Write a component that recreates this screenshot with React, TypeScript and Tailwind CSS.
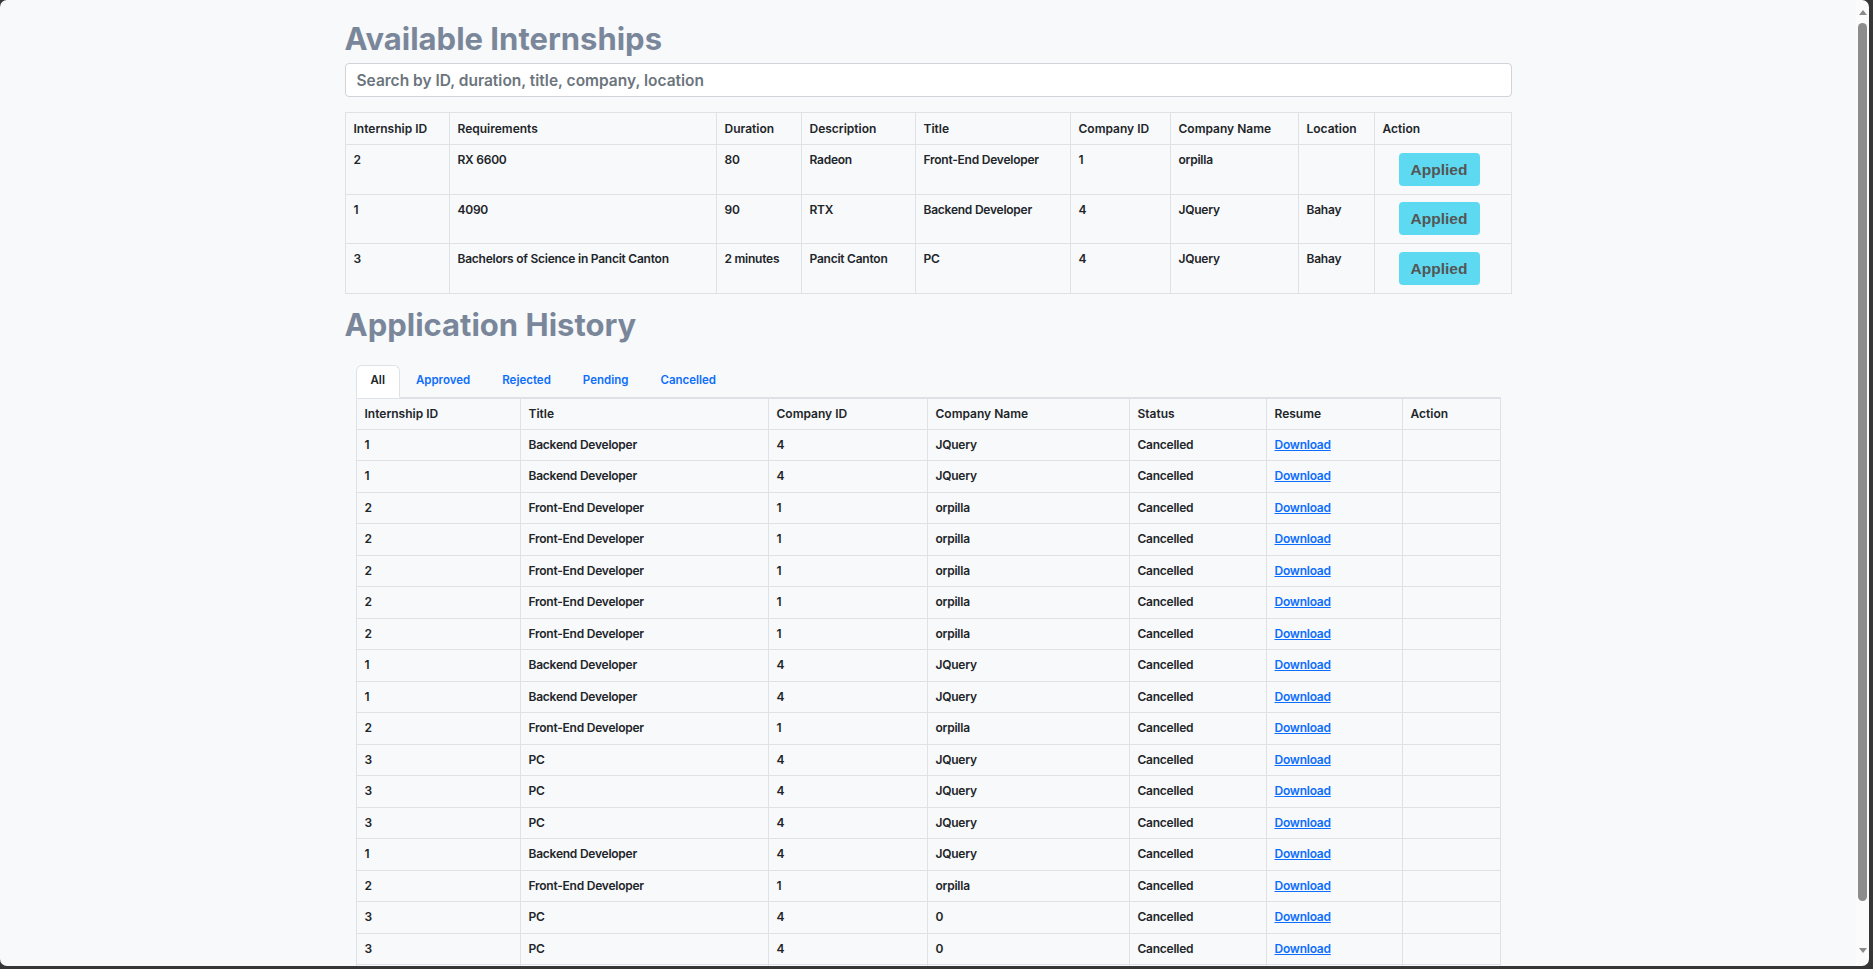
type Internship = {
  id: string;
  requirements: string;
  duration: string;
  description: string;
  title: string;
  companyId: string;
  companyName: string;
  location: string;
};

const internships: Internship[] = [
  { id: '2', requirements: 'RX 6600', duration: '80', description: 'Radeon', title: 'Front-End Developer', companyId: '1', companyName: 'orpilla', location: '' },
  { id: '1', requirements: '4090', duration: '90', description: 'RTX', title: 'Backend Developer', companyId: '4', companyName: 'JQuery', location: 'Bahay' },
  { id: '3', requirements: 'Bachelors of Science in Pancit Canton', duration: '2 minutes', description: 'Pancit Canton', title: 'PC', companyId: '4', companyName: 'JQuery', location: 'Bahay' },
];

const BD = ['1', 'Backend Developer', '4', 'JQuery'];
const FE = ['2', 'Front-End Developer', '1', 'orpilla'];
const PC = ['3', 'PC', '4', 'JQuery'];
const PC0 = ['3', 'PC', '4', '0'];

const history: string[][] = [BD, BD, FE, FE, FE, FE, FE, BD, BD, FE, PC, PC, PC, BD, FE, PC0, PC0, PC0];

const tabs = ['All', 'Approved', 'Rejected', 'Pending', 'Cancelled'];

function Heading({ children }: { children: string }) {
  return <h1 className="text-[31px] leading-[36px] font-bold text-[#7a879b]">{children}</h1>;
}

function Arrow({ down }: { down?: boolean }) {
  return (
    <svg width="8" height="5" viewBox="0 0 8 5" className="shrink-0">
      <path d={down ? 'M0 0 L8 0 L4 5 Z' : 'M0 5 L8 5 L4 0 Z'} fill="#8a8a8a" />
    </svg>
  );
}

export default function App() {
  const th1 = 'border border-[#dee2e6] px-2 h-[32px] text-left align-middle font-semibold';
  const td1 = 'border border-[#dee2e6] px-2 pt-2 align-top leading-[14px]';
  const th2 = 'border border-[#dee2e6] px-2 text-left align-middle font-semibold';
  const td2 = 'border border-[#dee2e6] px-2 align-middle';

  return (
    <div className="h-[969px] w-full overflow-hidden bg-[#363636]">
      <div className="mr-[4px] flex h-[966px] overflow-hidden rounded-[7px]">
        <main className="flex-1 overflow-hidden bg-[#f8f9fa] font-['Inter',sans-serif] text-[#212529]">
          <div className="mx-auto w-[1167px] pt-[21px]">
            <Heading>Available Internships</Heading>
            <input
              className="mt-[6px] block h-[34px] w-full rounded-[4px] border border-[#ced4da] bg-white px-[11px] text-[15.5px] font-semibold outline-none placeholder:text-[#6c757d]"
              placeholder="Search by ID, duration, title, company, location"
            />

            <table className="mt-[15px] w-full table-fixed border-collapse text-[12px]">
              <thead>
                <tr>
                  <th className={`${th1} w-[104px]`}>Internship ID</th>
                  <th className={`${th1} w-[267px]`}>Requirements</th>
                  <th className={`${th1} w-[85px]`}>Duration</th>
                  <th className={`${th1} w-[114px]`}>Description</th>
                  <th className={`${th1} w-[155px]`}>Title</th>
                  <th className={`${th1} w-[100px]`}>Company ID</th>
                  <th className={`${th1} w-[128px]`}>Company Name</th>
                  <th className={`${th1} w-[76px]`}>Location</th>
                  <th className={th1}>Action</th>
                </tr>
              </thead>
              <tbody className="font-semibold tracking-[-0.02em]">
                {internships.map((it) => (
                  <tr key={it.id}>
                    <td className={td1}>{it.id}</td>
                    <td className={td1}>{it.requirements}</td>
                    <td className={td1}>{it.duration}</td>
                    <td className={td1}>{it.description}</td>
                    <td className={td1}>{it.title}</td>
                    <td className={td1}>{it.companyId}</td>
                    <td className={td1}>{it.companyName}</td>
                    <td className={td1}>{it.location}</td>
                    <td className="border border-[#dee2e6] py-[7.75px] pr-[11px] pl-[4px] text-center align-top">
                      <button className="h-[33px] w-[81px] rounded-[4px] bg-[#5ddaf1] font-['Liberation_Sans',Arial,sans-serif] text-[15.5px] font-bold tracking-normal text-[#555]">
                        Applied
                      </button>
                    </td>
                  </tr>
                ))}
              </tbody>
            </table>

            <div className="mt-[13px]">
              <Heading>Application History</Heading>
            </div>

            <div className="mx-[11px] mt-[22px]">
              <div className="flex h-[33px] border-b border-[#dee2e6] text-[11.5px] font-semibold">
                {tabs.map((t, i) =>
                  i === 0 ? (
                    <div
                      key={t}
                      className="-mb-px flex h-[33px] items-center rounded-t-[6px] border border-[#dee2e6] border-b-white bg-white px-[14px] text-[#212529]"
                    >
                      {t}
                    </div>
                  ) : (
                    <div key={t} className="flex h-[32px] items-center px-4 text-[#0d6efd]">
                      {t}
                    </div>
                  ),
                )}
              </div>

              <table className="w-full table-fixed border-collapse text-[12px] leading-[16px]">
                <thead>
                  <tr className="h-[31px]">
                    <th className={`${th2} w-[164px]`}>Internship ID</th>
                    <th className={`${th2} w-[248px]`}>Title</th>
                    <th className={`${th2} w-[159px]`}>Company ID</th>
                    <th className={`${th2} w-[202px]`}>Company Name</th>
                    <th className={`${th2} w-[137px]`}>Status</th>
                    <th className={`${th2} w-[136px]`}>Resume</th>
                    <th className={th2}>Action</th>
                  </tr>
                </thead>
                <tbody className="font-semibold tracking-[-0.02em]">
                  {history.map((row, i) => (
                    <tr key={i} className="h-[31.5px]">
                      {row.map((cell, j) => (
                        <td key={j} className={td2}>
                          {cell}
                        </td>
                      ))}
                      <td className={td2}>Cancelled</td>
                      <td className={td2}>
                        <a href="#" className="text-[#0d6efd] underline">
                          Download
                        </a>
                      </td>
                      <td className={td2} />
                    </tr>
                  ))}
                </tbody>
              </table>
            </div>
          </div>
        </main>

        <div className="flex w-[13px] flex-col items-center bg-[#fbfbfb] pt-[10px]">
          <Arrow />
          <div className="mt-[8px] h-[878px] w-[9px] rounded-full bg-[#8c8c8c]" />
          <div className="mt-auto mb-[13px]">
            <Arrow down />
          </div>
        </div>
      </div>
    </div>
  );
}
